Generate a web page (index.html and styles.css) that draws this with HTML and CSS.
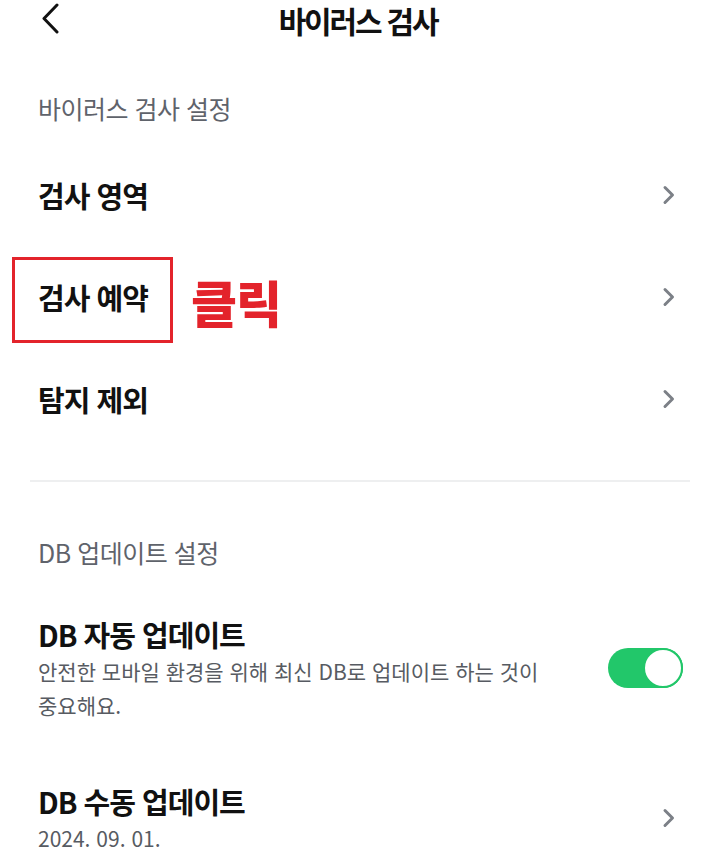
FILE: index.html
```html
<!DOCTYPE html>
<html lang="ko">
<head>
<meta charset="utf-8">
<link rel="stylesheet" href="styles.css">
</head>
<body>
<div class="page">
  <header class="topbar">
    <svg class="back" width="22" height="32" viewBox="0 0 22 32"><path d="M18 3 L5 16.5 L18 30" fill="none" stroke="#111" stroke-width="3" stroke-linecap="round" stroke-linejoin="round"/></svg>
    <h1 class="title">바이러스 검사</h1>
  </header>

  <section class="group">
    <div class="group-label">바이러스 검사 설정</div>
    <div class="row"><span class="row-title">검사 영역</span><svg class="chev" width="14" height="20" viewBox="0 0 14 20"><path d="M3 2.5 L10.5 10 L3 17.5" fill="none" stroke="#7c8087" stroke-width="3" stroke-linecap="round" stroke-linejoin="round"/></svg></div>
    <div class="row highlighted"><span class="row-title">검사 예약</span><span class="mark-box"></span><span class="mark-text">클릭</span><svg class="chev" width="14" height="20" viewBox="0 0 14 20"><path d="M3 2.5 L10.5 10 L3 17.5" fill="none" stroke="#7c8087" stroke-width="3" stroke-linecap="round" stroke-linejoin="round"/></svg></div>
    <div class="row"><span class="row-title">탐지 제외</span><svg class="chev" width="14" height="20" viewBox="0 0 14 20"><path d="M3 2.5 L10.5 10 L3 17.5" fill="none" stroke="#7c8087" stroke-width="3" stroke-linecap="round" stroke-linejoin="round"/></svg></div>
  </section>

  <hr class="divider">

  <section class="group">
    <div class="group-label second">DB 업데이트 설정</div>
    <div class="item auto">
      <div class="item-text">
        <div class="row-title">DB 자동 업데이트</div>
        <div class="desc">안전한 모바일 환경을 위해 최신 DB로 업데이트 하는 것이<br>중요해요.</div>
      </div>
      <span class="toggle"><span class="knob"></span></span>
    </div>
    <div class="item manual">
      <div class="item-text">
        <div class="row-title">DB 수동 업데이트</div>
        <div class="desc">2024. 09. 01.</div>
      </div>
      <svg class="chev" width="14" height="20" viewBox="0 0 14 20"><path d="M3 2.5 L10.5 10 L3 17.5" fill="none" stroke="#7c8087" stroke-width="3" stroke-linecap="round" stroke-linejoin="round"/></svg>
    </div>
  </section>
</div>
</body>
</html>
```
FILE: styles.css
```css
html, body {
  margin: 0;
  padding: 0;
  background: #fff;
}
body {
  font-family: "Noto Sans CJK KR", "Noto Sans", sans-serif;
  color: #111;
  overflow: hidden;
}
.page {
  width: 720px;
  height: 847px;
  overflow: hidden;
}
.topbar {
  position: relative;
  height: 40px;
  display: flex;
  align-items: center;
  justify-content: center;
}
.back {
  position: absolute;
  left: 39px;
  top: 2px;
}
.title {
  margin: 0 0 0 -4px;
  font-size: 30px;
  font-weight: 700;
  letter-spacing: -2.2px;
  line-height: 40px;
  color: #111;
}
.group {
  padding: 0 46px 0 38px;
}
.group-label {
  margin-top: 46px;
  margin-bottom: 14px;
  height: 44px;
  line-height: 44px;
  font-size: 25px;
  font-weight: 400;
  color: #5f636b;
  letter-spacing: -0.5px;
}
.group-label.second {
  margin-top: 48px;
  margin-bottom: 0;
}
.row {
  position: relative;
  height: 102px;
  display: flex;
  align-items: center;
  justify-content: space-between;
}
.row-title {
  font-size: 29px;
  font-weight: 700;
  letter-spacing: -1px;
  line-height: 40px;
  color: #111;
}
.chev {
  display: block;
  margin-right: -2px;
}
.mark-box {
  position: absolute;
  left: -26px;
  top: 11px;
  width: 155px;
  height: 80px;
  border: 3px solid #e3232b;
}
.mark-text {
  position: absolute;
  left: 153px;
  top: 24px;
  font-size: 50px;
  font-weight: 900;
  line-height: 62px;
  color: #e3232b;
  letter-spacing: -1px;
}
.divider {
  margin: 30px 30px 0;
  border: 0;
  height: 2px;
  background: #eeeff0;
}
.item {
  display: flex;
  align-items: center;
  justify-content: space-between;
}
.item.auto {
  margin-top: 40px;
}
.item.manual {
  margin-top: 59px;
}
.desc {
  font-size: 21px;
  line-height: 34px;
  color: #575b62;
  letter-spacing: 0;
}
.toggle {
  position: relative;
  width: 75px;
  height: 40px;
  border-radius: 20px;
  background: #22c76a;
  margin-right: -9px;
  flex: none;
}
.knob {
  position: absolute;
  right: 0;
  top: 0;
  width: 36px;
  height: 36px;
  border-radius: 50%;
  background: #fff;
  border: 2px solid #22c76a;
}
```
